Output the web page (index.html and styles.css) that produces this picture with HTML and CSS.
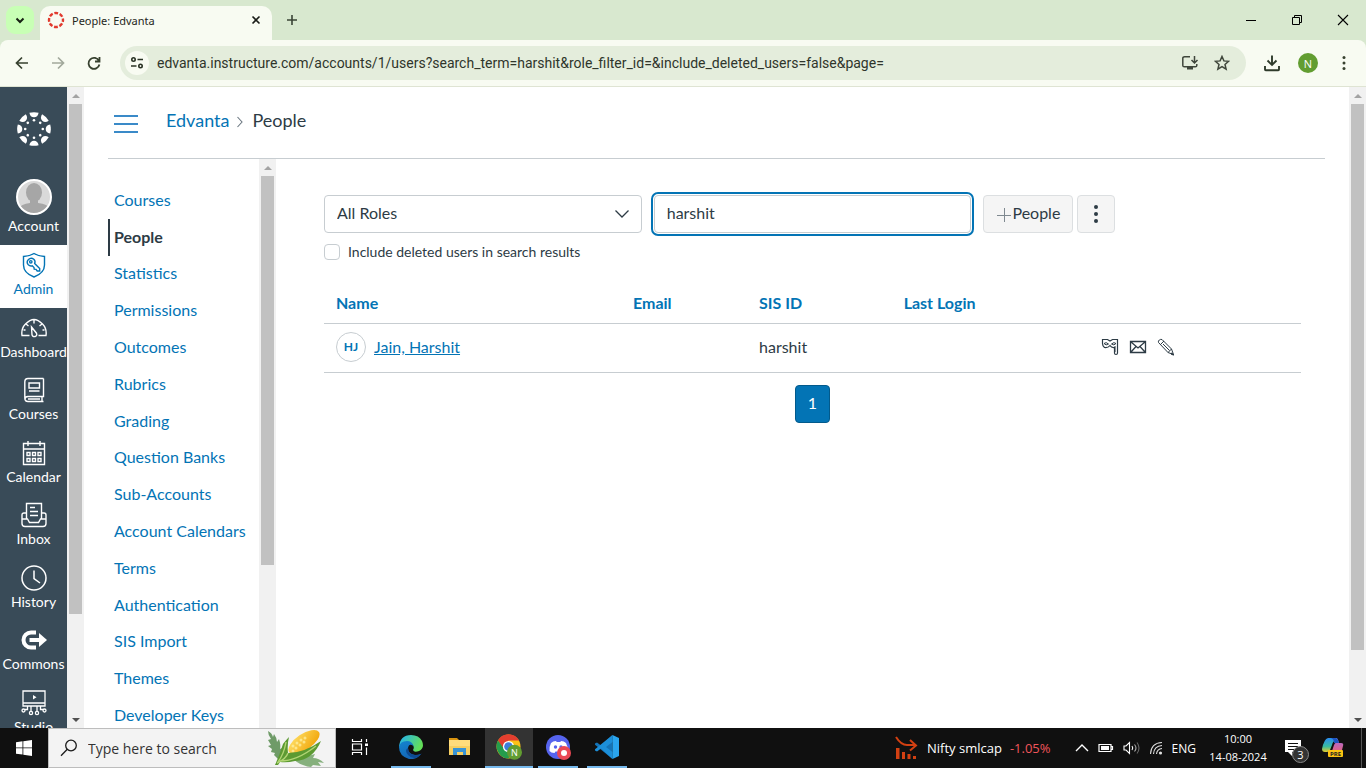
FILE: index.html
```html
<!DOCTYPE html>
<html lang="en">
<head>
<meta charset="utf-8">
<meta name="viewport" content="width=device-width, initial-scale=1">
<title>People: Edvanta</title>
<link rel="stylesheet" href="styles.css">
</head>
<body>
<div class="screen">
  <header class="browser">
    <div class="tabstrip">
      <button class="tab-search" aria-label="Search tabs"><svg width="10" height="10" viewBox="0 0 10 10"><path d="M1.500 3.500 5 7l3.500-3.500" fill="none" stroke="#172013" stroke-width="2"/></svg></button>
      <div class="tab">
        <svg class="favicon" width="18" height="18" viewBox="0 0 18 18"><circle cx="9" cy="9" r="7" fill="none" stroke="#e13a2e" stroke-width="2.400" stroke-dasharray="3.800 1.698" stroke-dashoffset="1.900"/></svg>
        <span class="tab-title">People: Edvanta</span>
        <button class="tab-close" aria-label="Close tab"><svg width="10" height="10" viewBox="0 0 10 10"><path d="M1.500 1.500l7 7M8.500 1.500l-7 7" stroke="#1a1d18" stroke-width="1.600"/></svg></button>
      </div>
      <button class="new-tab" aria-label="New tab"><svg width="12" height="12" viewBox="0 0 12 12"><path d="M6 1v10M1 6h10" stroke="#3a4436" stroke-width="1.600"/></svg></button>
      <div class="window-buttons">
        <button aria-label="Minimize"><svg width="12" height="12" viewBox="0 0 12 12"><path d="M1 6.500h10" stroke="#000"/></svg></button>
        <button aria-label="Restore"><svg width="12" height="12" viewBox="0 0 12 12"><path d="M1.500 3.500h7v7h-7zM3.500 3.500v-2h7v7h-2" fill="none" stroke="#000"/></svg></button>
        <button aria-label="Close"><svg width="12" height="12" viewBox="0 0 12 12"><path d="M1 1l10 10M11 1 1 11" stroke="#000" stroke-width="1.100"/></svg></button>
      </div>
    </div>
    <div class="toolbar">
      <button class="tool" aria-label="Back"><svg width="16" height="16" viewBox="0 0 16 16"><path d="M14 8H3M8 2.500 2.500 8 8 13.500" fill="none" stroke="#37412f" stroke-width="1.700"/></svg></button>
      <button class="tool" aria-label="Forward"><svg width="16" height="16" viewBox="0 0 16 16"><path d="M2 8h11M8 2.500 13.500 8 8 13.500" fill="none" stroke="#a2a99c" stroke-width="1.700"/></svg></button>
      <button class="tool" aria-label="Reload"><svg width="16" height="16" viewBox="0 0 16 16"><path d="M13 6a5.500 5.500 0 1 0 .4 3.500M13.500 2v4.500H9" fill="none" stroke="#37412f" stroke-width="1.800"/></svg></button>
      <div class="omnibox">
        <button class="site-info" aria-label="Site information"><svg width="14" height="14" viewBox="0 0 14 14"><g fill="none" stroke="#2a3325" stroke-width="1.600"><circle cx="3.500" cy="3.500" r="1.700"/><circle cx="10.500" cy="10" r="1.700"/><path d="M7.500 3.500H13M1 10h5.500"/></g></svg></button>
        <input class="url" type="text" aria-label="Address" value="edvanta.instructure.com/accounts/1/users?search_term=harshit&amp;role_filter_id=&amp;include_deleted_users=false&amp;page=">
        <button class="omni-icon" aria-label="Install app"><svg width="18" height="16" viewBox="0 0 18 16"><path d="M9 1.800H3.500Q1.800 1.800 1.800 3v7.500q0 1.300 1.500 1.300h11q1.500 0 1.500-1.300V9M13.500 1v6.500M10.500 5l3 3 3-3" fill="none" stroke="#3f463b" stroke-width="1.500"/><path d="M6 12h6v2.500H6z" fill="#3f463b"/></svg></button>
        <button class="omni-icon" aria-label="Bookmark this tab"><svg width="16" height="16" viewBox="0 0 16 16"><path d="m8 1.500 1.900 4.400 4.700.4-3.600 3.100 1.100 4.700L8 11.600l-4.100 2.500L5 9.400 1.400 6.300l4.700-.4z" fill="none" stroke="#3f463b" stroke-width="1.500"/></svg></button>
      </div>
      <button class="tool download" aria-label="Downloads"><svg width="18" height="18" viewBox="0 0 18 18"><path d="M9 1.500v9M4.500 6.500 9 11l4.500-4.500M2 12v3.500q0 .7.700.7h12.600q.7 0 .7-.7V12" fill="none" stroke="#2f3b2b" stroke-width="1.900"/></svg></button>
      <button class="profile" aria-label="Profile">N</button>
      <button class="tool" aria-label="Browser menu"><svg width="4" height="16" viewBox="0 0 4 16" fill="#37412f"><circle cx="2" cy="2.500" r="1.500"/><circle cx="2" cy="8" r="1.500"/><circle cx="2" cy="13.500" r="1.500"/></svg></button>
    </div>
  </header>

  <div class="page">
    <nav class="global-nav" aria-label="Global navigation">
      <a class="brand" href="#" aria-label="Canvas home">
        <svg width="34" height="34" viewBox="-17 -17 34 34" fill="#fff">
          <defs><g id="ray"><path d="M-4.600-16.200A17 17 0 0 1 4.600-16.200Q3.800-11.700 0-11.700T-4.600-16.200z"/><circle cy="-8.800" r="1.300"/></g></defs>
          <use href="#ray"/><use href="#ray" transform="rotate(45)"/><use href="#ray" transform="rotate(90)"/><use href="#ray" transform="rotate(135)"/><use href="#ray" transform="rotate(180)"/><use href="#ray" transform="rotate(225)"/><use href="#ray" transform="rotate(270)"/><use href="#ray" transform="rotate(315)"/>
        </svg>
      </a>
      <a class="account" href="#">
        <svg width="36" height="36" viewBox="0 0 36 36"><defs><clipPath id="face"><circle cx="18" cy="18" r="16.500"/></clipPath></defs><circle cx="18" cy="18" r="17" fill="#d9d9d9"/><g fill="#a6a6a6" clip-path="url(#face)"><ellipse cx="18" cy="13.500" rx="8" ry="9.500"/><path d="M14 20h8v4q10 1 12 6v6H2v-6q3-5 12-6z"/></g><circle cx="18" cy="18" r="17" fill="none" stroke="#fff" stroke-width="2"/></svg>
        <span>Account</span>
      </a>
      <div class="nav-items">
        <a class="nav-item active" href="#"><svg width="26" height="26" viewBox="0 0 26 26" fill="none" stroke="currentColor" stroke-width="1.400"><path d="M13 1.500Q17 4 23.500 4.500V13q0 8-10.500 12Q2.500 21 2.500 13V4.500Q9 4 13 1.500z"/><path d="M12.800 7.300a3.900 3.900 0 0 0-5.500 5.500q1.700 1.700 4 1l1.700 1.700.2 1.700 1.800.2 1.200 1.600h2.500v-2.500l-5-5q1-2.500-.9-4.200z"/><circle cx="9.800" cy="9.800" r="1.200"/></svg><span>Admin</span></a>
        <a class="nav-item" href="#"><svg width="26" height="26" viewBox="0 0 26 26" fill="none" stroke="currentColor" stroke-width="1.400"><path d="M8.500 20.500H1q-1-7 3.500-11.500t8.500-4.500 8.500 4.500T25 20.500h-7.500M13 5v3.500M5 9l2.500 2M21 9l-2.500 2M2.500 15h2M23.500 15h-2"/><path d="m10.500 12 5 6.200q1 2.600-1.400 3.300t-3.100-1.800z"/></svg><span>Dashboard</span></a>
        <a class="nav-item" href="#"><svg width="26" height="26" viewBox="0 0 26 26" fill="none" stroke="currentColor" stroke-width="1.400"><path d="M22.500 1.500H7Q3.800 1.500 3.800 5v16q0 3.500 3.200 3.500h15.500M22.500 1.500v18H7q-3 0-3 2.500M21 19.500v5M7 22h12"/><path d="M8 6h10.500v5H8zM8 14h10.500"/></svg><span>Courses</span></a>
        <a class="nav-item" href="#"><svg width="26" height="26" viewBox="0 0 26 26" fill="none" stroke="currentColor" stroke-width="1.400"><path d="M2.500 3.500h21v21h-21zM2.500 9h21M7 1v5M19 1v5"/><path d="M6 12.500h3v3H6zm5.500 0h3v3h-3zm5.500 0h3v3h-3zM6 18.500h3v3H6zm5.500 0h3v3h-3zm5.500 0h3v3h-3z"/></svg><span>Calendar</span></a>
        <a class="nav-item" href="#"><svg width="26" height="26" viewBox="0 0 26 26" fill="none" stroke="currentColor" stroke-width="1.400"><path d="M5.500 17V1.500h15V17M9 5.500h5M9 9.500h8M9 13.500h8M5.500 11H3q-2 0-2 2v8.500q0 3 3 3h18q3 0 3-3V13q0-2-2-2h-2.500M1 17h5.500l2 3.500h9l2-3.500H25"/></svg><span>Inbox</span></a>
        <a class="nav-item" href="#"><svg width="26" height="26" viewBox="0 0 26 26" fill="none" stroke="currentColor" stroke-width="1.500"><circle cx="13" cy="13" r="12"/><path d="M13 5.500v8l6 4.500"/></svg><span>History</span></a>
        <a class="nav-item" href="#"><svg width="26" height="26" viewBox="0 0 26 26" fill="none" stroke="currentColor"><path d="M15 5.500h-5a7.500 7.500 0 0 0 0 15h5" stroke-width="4"/><path d="M8.500 13H20" stroke-width="4"/><path d="m18 6 8 7-8 7z" fill="currentColor" stroke="none"/></svg><span>Commons</span></a>
        <a class="nav-item" href="#"><svg width="26" height="26" viewBox="0 0 26 26" fill="none" stroke="currentColor" stroke-width="1.300"><path d="M2 1h22v15H2zM2 13h22M10 16v5M16 16v5M6.500 16v3.500h-3M19.500 16v3.500h3"/><circle cx="2.500" cy="20.500" r="1.500"/><circle cx="10" cy="23" r="1.600"/><circle cx="16" cy="23" r="1.600"/><circle cx="23.500" cy="20.500" r="1.500"/><path d="m12 5 3.500 2.200L12 9.500z" fill="currentColor" stroke="none"/></svg><span>Studio</span></a>
      </div>
    </nav>
    <div class="scrollbar" aria-hidden="true"><i class="arrow up"></i><i class="track"><b class="thumb nav-thumb"></b></i><i class="arrow down"></i></div>

    <div class="app">
      <div class="crumbs">
        <button class="hamburger" aria-label="Toggle menu"><i></i><i></i><i></i></button>
        <a href="#">Edvanta</a>
        <svg width="8" height="12" viewBox="0 0 8 12"><path d="m1.500 1 4.500 5-4.500 5" fill="none" stroke="#6b7780" stroke-width="1.100"/></svg>
        <span>People</span>
      </div>
      <div class="body">
        <nav class="side" aria-label="Account navigation">
          <div class="side-list">
            <a href="#">Courses</a><a class="current" href="#">People</a><a href="#">Statistics</a><a href="#">Permissions</a><a href="#">Outcomes</a><a href="#">Rubrics</a><a href="#">Grading</a><a href="#">Question Banks</a><a href="#">Sub-Accounts</a><a href="#">Account Calendars</a><a href="#">Terms</a><a href="#">Authentication</a><a href="#">SIS Import</a><a href="#">Themes</a><a href="#">Developer Keys</a>
          </div>
        </nav>
        <div class="scrollbar" aria-hidden="true"><i class="arrow up"></i><i class="track"><b class="thumb side-thumb"></b></i></div>
        <main class="content">
          <form class="filters">
            <div class="select-wrap">
              <select aria-label="Filter by role"><option>All Roles</option></select>
              <svg width="16" height="10" viewBox="0 0 16 10"><path d="m1.500 1.500 6.500 6.500 6.500-6.500" fill="none" stroke="#2d3b45" stroke-width="1.300"/></svg>
            </div>
            <input class="search" type="text" aria-label="Search people" value="harshit">
            <div class="actions">
              <button class="btn" type="button"><svg width="14" height="14" viewBox="0 0 14 14"><path d="M7.500 0v14M0 7.500h14" stroke="#7f8990"/></svg>People</button>
              <button class="btn more" type="button" aria-label="More options"><svg width="6" height="20" viewBox="0 0 6 20" fill="#2d3b45"><circle cx="3" cy="3" r="2"/><circle cx="3" cy="10" r="2"/><circle cx="3" cy="17" r="2"/></svg></button>
            </div>
          </form>
          <label class="check"><input type="checkbox">Include deleted users in search results</label>
          <table class="people">
            <colgroup><col class="c-name"><col class="c-email"><col class="c-sis"><col class="c-login"><col></colgroup>
            <thead><tr><th>Name</th><th>Email</th><th>SIS ID</th><th>Last Login</th><th></th></tr></thead>
            <tbody><tr>
              <td><div class="person"><span class="avatar">HJ</span><a href="#">Jain, Harshit</a></div></td>
              <td></td><td>harshit</td><td></td>
              <td><div class="row-icons">
                <button aria-label="Act as user"><svg width="18" height="18" viewBox="0 0 18 18" fill="none" stroke="#2d3b45"><path d="M1.500 1.500h5L9 3l2.500-1.500h5V15q0 1.500-1.500 1.500T13.500 15V9.500Q10.500 10 9 7.500 7 10 3.500 9.500q-2-1.500-2-4z" stroke-width="1.200"/><path d="M3 5.500Q5 3.500 7.500 6 5 8 3 5.500zM10.500 6q2.500-2.500 4.500-.5-2 2.500-4.500.5zM14 8v6"/></svg></button>
                <button aria-label="Message user"><svg width="18" height="18" viewBox="0 0 18 18" fill="none" stroke="#2d3b45" stroke-width="1.300"><path d="M1.500 3.500h15v11h-15zM2 4l7 6 7-6M2 14l5-5.500M16 14l-5-5.500"/></svg></button>
                <button aria-label="Edit user"><svg width="18" height="18" viewBox="0 0 18 18" fill="none" stroke="#2d3b45"><path d="M1.500 4.500q-.5-1.500.8-2.500T5 1.500L14.500 11l2 5.500-5.500-2zM3.500 6.500l3.500-3.500M11 14.500l3.500-3.500M6 6l6.500 6.500"/><path d="m14.500 15 2.500 2-2.500-.5z" fill="#2d3b45"/></svg></button>
              </div></td>
            </tr></tbody>
          </table>
          <div class="pager"><button aria-label="Page 1">1</button></div>
        </main>
      </div>
    </div>
    <div class="scrollbar" aria-hidden="true"><i class="arrow up"></i><i class="track"><b class="thumb page-thumb"></b></i><i class="arrow down"></i></div>
  </div>

  <footer class="taskbar">
    <button class="start" aria-label="Start"><svg width="16" height="16" viewBox="0 0 16 16" fill="#fff"><path d="M0 2.200 6.500 1.300v6.200H0zM7.300 1.200 16 0v7.500H7.300zM0 8.300h6.500v6.300L0 13.700zM7.300 8.300H16V16l-8.700-1.200z"/></svg></button>
    <div class="task-search">
      <svg width="18" height="18" viewBox="0 0 18 18"><g fill="none" stroke="#1b1b1b" stroke-width="1.300"><circle cx="11" cy="6.500" r="5.300"/><path d="M7.300 10.300 1 16.700"/></g></svg>
      <input type="text" aria-label="Type here to search" placeholder="Type here to search">
      <svg class="corn" width="60" height="38" viewBox="0 0 60 38">
        <defs><linearGradient id="kern" x1="0" y1="0" x2="1" y2="1"><stop offset="0" stop-color="#ffe16a"/><stop offset="1" stop-color="#f0a000"/></linearGradient></defs>
        <path d="M2 2q4 2 5 6l1-3q3 4 3 8l2-3q2 6 1 10l2-1q0 5-4 11l-4-4 1-2-4-1 1-3-4-3 3-1-3-5 3-1q-3-4-3-8z" fill="#6f9b68"/>
        <path d="M27 30q8-6 15-3l7-2-2 4q6 0 11 5l-6-1 3 4-8-1-2 2q-10-1-18-8z" fill="#86b07d"/>
        <ellipse cx="38" cy="13" rx="18" ry="8" transform="rotate(-34 38 13)" fill="url(#kern)"/>
        <g fill="#fff3a8" opacity=".7"><circle cx="27" cy="17" r="1.500"/><circle cx="31" cy="14" r="1.500"/><circle cx="35" cy="11" r="1.500"/><circle cx="30" cy="19" r="1.500"/><circle cx="34" cy="16" r="1.500"/><circle cx="39" cy="9" r="1.500"/><circle cx="27" cy="22" r="1.500"/><circle cx="38" cy="13" r="1.500"/></g>
        <path d="M9 36Q14 25 17 15q3-4 6-7-2 8-1 16 16 0 33-12-8 19-26 20-8 2-15 1l-2 3z" fill="#5c9a32"/>
        <path d="M11 34q9-4 11-10M14 32q17 0 36-15M12 33q6-8 8-20" fill="none" stroke="#b1d474" stroke-width="1.400"/>
      </svg>
    </div>
    <button class="task" aria-label="Task view"><svg width="18" height="16" viewBox="0 0 18 16" fill="none" stroke="#fff" stroke-width="1.200"><path d="M1.500 0v2.500h9V0M1.500 16v-2.500h9V16M1.500 5h9v6h-9zM15.500 0v3M15.500 8.500V16"/><path d="M14 4.500h3v2.500h-3z" fill="#fff" stroke="none"/></svg></button>
    <div class="apps">
      <button class="task running" aria-label="Edge"><svg width="24" height="24" viewBox="0 0 24 24"><defs><linearGradient id="eg" x1="0" y1="0" x2="1" y2=".4"><stop offset=".1" stop-color="#27b5e8"/><stop offset="1" stop-color="#63de58"/></linearGradient><linearGradient id="eb" x1="0" y1="0" x2=".5" y2="1"><stop offset="0" stop-color="#1385cf"/><stop offset="1" stop-color="#1464b5"/></linearGradient></defs><path d="M0 12Q1 0 12 0q8 0 11 6 3 7-3 10-5 2-6-1 2-3-1-6Q7 5 0 12z" fill="url(#eg)"/><path d="M0 12q1-6 8-6 5 0 6.500 5Q10 7.500 9 13q0 6 7 7 4 0 6-1-5 6-12 5Q0 21 0 12z" fill="url(#eb)"/><path d="M9 13q0 6 7 7 5 0 7-2-7 9-14 2-4-5 0-7z" fill="#0d4a92"/></svg></button>
      <button class="task" aria-label="File Explorer"><svg width="22" height="20" viewBox="0 0 22 20"><path d="M0 1h8l2 2H0z" fill="#d99410"/><path d="M0 3h21v15H0z" fill="#f7cf61"/><path d="M0 3h21v6H0z" fill="#ffdc7c"/><path d="M4 18v-7h13v7h-3v-3H8v3z" fill="#3893d4"/></svg></button>
      <button class="task running selected" aria-label="Chrome"><svg width="26" height="26" viewBox="0 0 26 26"><circle cx="12.500" cy="12.500" r="12" fill="#fbc117"/><path d="M2 6.500a12 12 0 0 1 21 0H12.500L7 15.500z" fill="#e43e2f"/><path d="M2 6.500l6.500 9 8 1-4 8Q4 24.500 1 15.500-.5 10.500 2 6.500z" fill="#249d4c"/><circle cx="12.500" cy="12.500" r="5.600" fill="#fff"/><circle cx="12.500" cy="12.500" r="4.300" fill="#3d7edb"/><circle cx="18.500" cy="18.300" r="7.500" fill="#629d31"/><text x="18.500" y="21.700" text-anchor="middle" class="badge-n">N</text></svg></button>
      <button class="task running" aria-label="Discord"><svg width="26" height="26" viewBox="0 0 26 26"><circle cx="13" cy="13" r="12" fill="#5664ee"/><path d="M6 9q2-2 5-2l.7 1h3.600l.7-1q3 0 5 2 2 4 2 8-2 2-4.500 2l-1-1.500h-7L9.500 19Q6 19 4.500 17 4 13 6 9z" fill="#fff"/><circle cx="10.500" cy="13" r="1.700" fill="#5664ee"/><circle cx="16" cy="13" r="1.700" fill="#5664ee"/><circle cx="19" cy="19" r="7" fill="#ea4854"/><circle cx="19" cy="19" r="3" fill="#fff"/></svg></button>
      <button class="task running" aria-label="Visual Studio Code"><svg width="24" height="24" viewBox="0 0 24 24"><path d="M17.500 0 6 10.500 2 7.500 0 8.500v1.300L17.500 24z" fill="#1474b8"/><path d="M17.500 0 24 3v18l-6.500 3z" fill="#2aa5ee"/><path d="M17.500 24 6 13.500l-4 3-2-1v-1.300L17.500 0v7L11 12l6.500 5z" fill="#1c8fd9"/></svg></button>
    </div>
    <div class="tray">
      <button class="stock"><svg width="24" height="24" viewBox="0 0 24 24"><path d="M1 1q5 8 11 8h8" fill="none" stroke="#d24012" stroke-width="2"/><path d="m15 4 6 5.500-6 5" fill="none" stroke="#d24012" stroke-width="2"/><path d="M1 12h3.500v11H1zM7 16h3v7H7zM12.500 18h3v5h-3zM18 20h3v3h-3z" fill="#d24012"/></svg><span>Nifty smlcap</span><span class="loss">-1.05%</span></button>
      <div class="status">
        <svg width="14" height="10" viewBox="0 0 14 10"><path d="m1 8 6-6 6 6" fill="none" stroke="#fff" stroke-width="1.400"/></svg>
        <svg width="16" height="10" viewBox="0 0 16 10"><path d="M1 1.500h12v7H1zM13 3.500h1.500v3H13" fill="none" stroke="#fff" stroke-width="1.200"/><path d="M3 3h8v4H3z" fill="#fff"/></svg>
        <svg width="17" height="14" viewBox="0 0 17 14" fill="none" stroke="#fff" stroke-width="1.100"><path d="M1 5h2l3.500-3.500v11L3 9H1zM9 5q1.500 2 0 4"/><path d="M11.500 3.500q3 3.500 0 7" stroke="#aaa"/><path d="M14 1.500q4 5.500 0 11" stroke="#666"/></svg>
        <svg width="14" height="14" viewBox="0 0 14 14" fill="none" stroke="#ddd" stroke-width="1.100"><path d="M1.500 13Q2 2 13 1.500M4.500 13Q5 5 13 4.500M7.500 13Q8 8 13 7.500"/><circle cx="11.500" cy="12" r="1" fill="#fff"/></svg>
      </div>
      <span class="lang">ENG</span>
      <div class="clock"><span>10:00</span><span>14-08-2024</span></div>
      <button class="notify" aria-label="3 notifications"><svg width="18" height="18" viewBox="0 0 18 18"><path d="M1 1h16v12h-9v4l-4-4H1z" fill="#fff"/><path d="M4 4.500h10M4 7.500h10M4 10.500h6" stroke="#111"/></svg><span class="count">3</span></button>
      <button class="copilot" aria-label="Copilot"><svg width="22" height="22" viewBox="0 0 22 22"><defs><linearGradient id="ca" x1="0" y1="0" x2="0" y2="1"><stop offset="0" stop-color="#2b8cf1"/><stop offset=".6" stop-color="#38bca0"/><stop offset="1" stop-color="#e5cd2b"/></linearGradient><linearGradient id="cb" x1="0" y1="0" x2="0" y2="1"><stop offset="0" stop-color="#a06be8"/><stop offset="1" stop-color="#f0636b"/></linearGradient></defs><path d="M6 1h8q2 0 2 3H13q-2 0-3 4l-2 5q-1 2-3 2H3q-3 0-3-3 2-10 6-11z" fill="url(#ca)"/><path d="M13 1q3 0 4 5h2q3 0 2 3l-2 8h-8q-2 0-1-3l2-6q1-3 4-2-1-4-3-5z" fill="url(#cb)"/><path d="M13 1q3 0 4 5h-5q0-4-3-5z" fill="#1d54c0"/><rect x="6" y="13" width="15" height="7" rx="1" fill="#fcc312"/><text x="13.500" y="19" text-anchor="middle" class="pre">PRE</text></svg></button>
      <i class="desktop-edge"></i>
    </div>
  </footer>
</div>
</body>
</html>
```
FILE: styles.css
```css
* { box-sizing: border-box; }
body { margin: 0; font-family: Lato, "Liberation Sans", sans-serif; font-size: 16px; color: #2d3b45; }
button { border: 0; padding: 0; background: none; font: inherit; color: inherit; display: flex; align-items: center; justify-content: center; flex: none; }
a { color: #0374b5; text-decoration: none; }
svg { flex: none; display: block; }
i { font-style: normal; }
.screen { height: 100vh; display: flex; flex-direction: column; overflow: hidden; background: #fff; }

/* Browser chrome */
.browser { flex: none; font-family: "Open Sans", "Noto Sans", sans-serif; background: #d8e8cf; }
.tabstrip { height: 40px; display: flex; align-items: center; padding-left: 6px; }
.tab-search { width: 28px; height: 28px; border-radius: 9px; background: #c8ffb5; }
.tab { width: 232px; height: 34px; margin: 6px 0 0 6px; padding: 0 11px 6px 7px; display: flex; align-items: center; border-radius: 10px 10px 0 0; background: #f8fbf2; }
.tab-title { flex: 1; padding-left: 7px; font-family: "Noto Sans", sans-serif; font-size: 11px; color: #1f261c; }
.new-tab { width: 28px; height: 28px; margin-left: 6px; }
.window-buttons { display: flex; margin-left: auto; }
.window-buttons button { width: 46px; height: 40px; }
.toolbar { height: 47px; display: flex; align-items: center; padding: 0 12px 0 4px; background: #f8fbf2; border-bottom: 1px solid #dfe4d3; border-radius: 8px 8px 0 0; }
.tool { width: 36px; height: 34px; }
.toolbar > .tool:last-child { width: 20px; margin-left: 16px; }
.omnibox { flex: 1; height: 34px; margin-left: 8px; padding: 0 16px 0 5px; display: flex; align-items: center; border-radius: 17px; background: #e4eddc; }
.site-info { width: 24px; height: 24px; border-radius: 12px; background: #f8fbf2; }
.url { flex: 1; min-width: 0; padding: 0 0 0 8px; border: 0; outline: 0; background: none; font-family: Roboto, "Open Sans", sans-serif; font-size: 14px; color: #2f352b; }
.omni-icon { margin-left: 15px; }
.download { margin-left: 8px; }
.profile { width: 20px; height: 20px; margin-left: 8px; border-radius: 10px; background: #629d31; color: #fff; font-size: 11px; }

/* Scrollbars */
.page { flex: 1; min-height: 0; display: flex; }
.scrollbar { flex: none; width: 17px; display: flex; flex-direction: column; background: #f1f1f1; }
.track { flex: 1; padding: 0 2px; }
.thumb { display: block; background: #c1c1c1; }
.nav-thumb { height: 84%; }
.side-thumb { height: 389px; }
.page-thumb { height: 90%; }
.arrow { height: 17px; display: flex; align-items: center; justify-content: center; }
.arrow::before { content: ""; border: 4px solid transparent; }
.arrow.up::before { border-top: 0; border-bottom-color: #a3a3a3; }
.arrow.down::before { border-bottom: 0; border-top-color: #505050; }

/* Global navigation */
.global-nav { flex: none; width: 67px; overflow: hidden; background: #394b58; font-size: 14px; line-height: 18px; }
.global-nav a { color: #fff; }
.brand { display: flex; justify-content: center; padding: 25px 0 33px; }
.account { display: flex; flex-direction: column; align-items: center; gap: 2px; padding-bottom: 10px; }
.nav-items { display: grid; grid-auto-rows: 1fr; height: 500px; }
.nav-item { display: flex; flex-direction: column; align-items: center; justify-content: center; gap: 2px; padding-bottom: 2px; }
.global-nav .active { background: #fff; color: #0374b5; }

/* Page frame */
.app { flex: 1; min-width: 0; display: flex; flex-direction: column; padding: 0 24px; }
.crumbs { flex: none; height: 72px; display: flex; align-items: center; padding: 0 6px 6px; border-bottom: 1px solid #c7cdd1; font-size: 18px; line-height: 24px; }
.crumbs svg { margin: 4px 8px 0 7px; }
.hamburger { flex-direction: column; gap: 6px; margin: 8px 28px 0 0; }
.hamburger i { width: 24px; height: 2px; background: #3a8ac8; }
.body { flex: 1; min-height: 0; display: flex; }
.side { flex: none; width: 151px; overflow: hidden; padding-top: 23px; }
.side-list { display: grid; grid-auto-rows: 1fr; height: 552px; }
.side-list a { display: flex; align-items: center; padding: 0 0 2px 4px; border-left: 2px solid transparent; }
.side-list .current { border-color: #2d3b45; color: #2d3b45; font-weight: 700; }

/* People list */
.content { flex: 1; min-width: 0; padding: 36px 24px 0 48px; }
.filters { display: grid; grid-template-columns: 1fr 1fr auto; gap: 12px; width: 81%; }
.select-wrap, .search { width: 100%; min-width: 0; height: 38px; }
.select-wrap { display: grid; align-items: center; }
.select-wrap > * { grid-area: 1 / 1; }
.select-wrap svg { justify-self: end; margin-right: 12px; pointer-events: none; }
select, .search { border: 1px solid #c7cdd1; border-radius: 4px; background: #fff; color: #2d3b45; padding: 0 12px 3px; font: inherit; }
select { width: 100%; height: 38px; appearance: none; }
.search { outline: 2px solid #0374b5; outline-offset: 1px; }
.actions { display: flex; gap: 4px; }
.btn { height: 38px; padding: 0 12px 3px 13px; gap: 1px; border: 1px solid #dcdfe1; border-radius: 4px; background: #f5f5f5; }
.btn svg { margin-top: 4px; }
.more { width: 38px; padding: 0; }
.more svg { margin: 0; }
.check { display: flex; align-items: center; gap: 8px; margin-top: 9px; font-size: 14px; line-height: 20px; }
.check input { appearance: none; width: 16px; height: 16px; margin: 0; border: 1px solid #c7cdd1; border-radius: 4px; background: #fff; }
.people { width: 100%; margin-top: 20px; border-collapse: collapse; table-layout: fixed; }
.c-name { width: 30.4%; }
.c-email { width: 12.9%; }
.c-sis { width: 14.8%; }
.c-login { width: 20.2%; }
.people th, .people td { padding: 0 12px; text-align: left; border-bottom: 1px solid #c7cdd1; }
.people th { height: 41px; color: #0374b5; font-weight: 700; }
.people td { height: 49px; padding-bottom: 2px; }
.person { display: flex; align-items: center; gap: 8px; }
.person a { text-decoration: underline; }
.avatar { width: 30px; height: 30px; display: flex; align-items: center; justify-content: center; border: 1px solid #c7cdd1; border-radius: 15px; color: #0374b5; font-size: 12px; font-weight: 700; }
.row-icons { display: flex; gap: 10px; }
.pager { display: flex; justify-content: center; margin-top: 12px; }
.pager button { width: 35px; height: 38px; padding-bottom: 2px; border: 1px solid #025a8c; border-radius: 4px; background: #0374b5; color: #fff; }

/* Taskbar */
.taskbar { flex: none; height: 40px; display: flex; background: #101010; color: #fff; font-family: "Open Sans", "Noto Sans", sans-serif; font-size: 12px; }
.start { width: 48px; }
.task-search { flex: none; width: 288px; display: flex; align-items: center; padding: 0 9px 0 11px; border: 1px solid #bdbdbd; background: #f3f3f3; }
.task-search input { flex: 1; min-width: 0; border: 0; outline: 0; padding: 0 0 0 10px; background: none; font-family: "Open Sans", sans-serif; font-size: 14px; }
.task-search input::placeholder { color: #333; opacity: 1; }
.task { width: 48px; border-bottom: 2px solid transparent; }
.apps { display: flex; gap: 1px; margin-left: 3px; }
.running { background: linear-gradient(#76b9ed, #76b9ed) center bottom / 40px 2px no-repeat border-box; }
.selected { background-color: #333; background-size: 48px 2px; }
.badge-n { fill: #fff; font-family: "Open Sans", sans-serif; font-size: 9px; }
.tray { display: flex; align-items: center; margin-left: auto; }
.stock { gap: 8px; font-size: 13px; }
.loss { color: #f0555b; }
.status { display: flex; align-items: center; gap: 9px; margin-left: 24px; }
.lang { margin-left: 9px; font-size: 12px; }
.clock { display: flex; flex-direction: column; align-items: center; width: 60px; margin-left: 12px; font-size: 11px; line-height: 18px; }
.notify { position: relative; margin-left: 16px; }
.count { position: absolute; left: 8px; top: 7px; width: 17px; height: 17px; display: flex; align-items: center; justify-content: center; border: 1px solid #888; border-radius: 9px; background: #333; font-size: 11px; }
.copilot { margin-left: 20px; }
.pre { fill: #222; font-family: "Open Sans", sans-serif; font-size: 6px; font-weight: 700; }
.desktop-edge { width: 1px; height: 40px; margin: 0 4px 0 17px; background: #555; }
```
